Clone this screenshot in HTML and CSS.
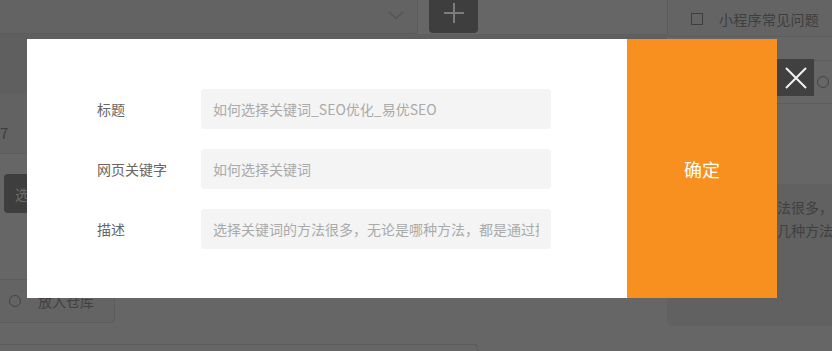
FILE: index.html
```html
<!DOCTYPE html>
<html lang="zh-CN">
<head>
  <meta charset="UTF-8">
  <meta name="viewport" content="width=device-width, initial-scale=1.0">
  <title>页面设置</title>
  <link rel="stylesheet" href="styles.css">
</head>
<body>

  <!-- page behind the mask -->
  <div class="page">
    <div class="main">
      <div class="toolbar">
        <div class="select">
          <svg class="chevron" width="16" height="9" viewBox="0 0 16 9"><path d="M1 1l7 6.5L15 1" fill="none" stroke="#555" stroke-width="1.6"/></svg>
        </div>
        <button class="add-btn">
          <svg width="22" height="22" viewBox="0 0 22 22"><path d="M11 1v20M1 11h20" stroke="#7c7c7c" stroke-width="2"/></svg>
        </button>
      </div>
      <div class="band"></div>
      <div class="row-num">7</div>
      <div class="row-pick"><button class="pick-btn">选择</button></div>
      <label class="store"><span class="radio"></span>放入仓库</label>
      <div class="box"></div>
    </div>

    <aside class="side">
      <div class="faq"><span class="check"></span>小程序常见问题</div>
      <div class="side-row"><span class="radio"></span></div>
      <div class="side-panel">
        <p>选择关键词的方法很多，无论是哪种方法，</p>
        <p>都是通过以下的几种方法来确定的</p>
      </div>
    </aside>
  </div>

  <!-- dialog -->
  <div class="mask">
    <div class="dialog">
      <form class="form">
        <div class="field">
          <label>标题</label>
          <input type="text" value="如何选择关键词_SEO优化_易优SEO">
        </div>
        <div class="field">
          <label>网页关键字</label>
          <input type="text" value="如何选择关键词">
        </div>
        <div class="field">
          <label>描述</label>
          <input type="text" value="选择关键词的方法很多，无论是哪种方法，都是通过搜索引擎来确定的">
        </div>
      </form>
      <button class="confirm">确定</button>
      <button class="close">
        <svg width="22" height="22" viewBox="0 0 22 22"><path d="M1 1l20 20M21 1L1 21" stroke="#f2f2f2" stroke-width="2"/></svg>
      </button>
    </div>
  </div>

</body>
</html>
```

FILE: styles.css
```css
* {
  box-sizing: border-box;
}

body {
  margin: 0;
  width: 832px;
  height: 351px;
  overflow: hidden;
  background-color: #666;
  font-family: "Noto Sans CJK SC", "Noto Sans", sans-serif;
  font-size: 14px;
  color: #404040;
}

p {
  margin: 0;
}

button {
  font-family: inherit;
  border: none;
  cursor: pointer;
}

/* page behind */
.page {
  display: flex;
  height: 351px;
}

.main {
  flex: none;
  width: 667px;
  display: flex;
  flex-direction: column;
}

.toolbar {
  display: flex;
  gap: 11px;
  height: 34px;
}

.select {
  position: relative;
  width: 418px;
  height: 34px;
  background-color: #636363;
  border-right: 1px solid #5c5c5c;
  border-bottom: 1px solid #5c5c5c;
  border-bottom-right-radius: 4px;
}

.chevron {
  position: absolute;
  right: 13px;
  top: 11px;
}

.add-btn {
  width: 49px;
  height: 40px;
  margin-top: -7px;
  background-color: #3e3e3e;
  border-radius: 0 0 4px 4px;
  display: flex;
  align-items: center;
  justify-content: center;
}

.band {
  flex: none;
  height: 59px;
  background-color: #5f5f5f;
}

.row-num {
  flex: none;
  height: 61px;
  padding-top: 30px;
  line-height: 20px;
  background-color: #626262;
  border-bottom: 1px solid #5c5c5c;
  color: #3f3f3f;
  font-size: 15px;
}

.row-pick {
  flex: none;
  height: 125px;
  padding: 20px 0 0 4px;
}

.pick-btn {
  height: 39px;
  padding: 0 11px;
  background-color: #3e3e3e;
  color: #6c6c6c;
  font-size: 14px;
  border-radius: 4px;
}

.store {
  flex: none;
  display: flex;
  align-items: center;
  gap: 17px;
  width: 115px;
  height: 44px;
  padding-left: 9px;
  white-space: nowrap;
  background-color: #646464;
  border: 1px solid #5c5c5c;
  border-left: none;
  border-radius: 0 0 4px 0;
  color: #404040;
  font-size: 14px;
}

.radio {
  width: 12px;
  height: 12px;
  border: 1px solid #444;
  border-radius: 50%;
  flex: none;
}

.box {
  flex: none;
  width: 478px;
  height: 20px;
  margin-top: 21px;
  border: 1px solid #5c5c5c;
  border-left: none;
  border-bottom: none;
  border-radius: 0 4px 0 0;
}

.side {
  flex: 1;
  min-width: 0;
  display: flex;
  flex-direction: column;
}

.faq {
  display: flex;
  align-items: center;
  height: 37px;
  padding: 1px 0 0 23px;
  background-color: #646464;
  border-left: 1px solid #5c5c5c;
  border-bottom: 1px solid #5c5c5c;
  border-bottom-left-radius: 4px;
  color: #3e3e3e;
  font-size: 14px;
  letter-spacing: 0.3px;
  white-space: nowrap;
}

.check {
  flex: none;
  width: 12px;
  height: 12px;
  margin-right: 16px;
  border: 1px solid #3d3d3d;
}

.side-row {
  display: flex;
  align-items: center;
  justify-content: flex-end;
  height: 44px;
  margin-top: 23px;
  padding-right: 3px;
  border-top: 1px solid #5c5c5c;
  border-bottom: 1px solid #5c5c5c;
}

.side-panel {
  height: 142px;
  margin-top: 80px;
  padding: 12px 0 0 12px;
  background-color: #616161;
  border-bottom-left-radius: 6px;
  white-space: nowrap;
  overflow: hidden;
  line-height: 23px;
  font-size: 14px;
  color: #404040;
}

/* dialog */
.mask {
  position: fixed;
  inset: 0;
  padding: 39px 0 0 27px;
}

.dialog {
  position: relative;
  display: flex;
  width: 750px;
  height: 259px;
}

.form {
  width: 600px;
  margin: 0;
  padding-top: 50px;
  background-color: #fff;
  display: flex;
  flex-direction: column;
  gap: 20px;
}

.field {
  display: flex;
  align-items: center;
}

.field label {
  width: 174px;
  padding-left: 70px;
  color: #666;
  font-size: 14px;
}

.field input {
  width: 350px;
  height: 40px;
  padding: 0 12px;
  border: none;
  border-radius: 4px;
  background-color: #f4f4f4;
  font-family: inherit;
  font-size: 14px;
  color: #aaa;
  outline: none;
}

.confirm {
  width: 150px;
  background-color: #f7901e;
  color: #fff;
  font-size: 18px;
  font-weight: normal;
}

.close {
  position: absolute;
  left: 750px;
  top: 20px;
  width: 37px;
  height: 37px;
  padding: 0;
  background-color: #404040;
  display: flex;
  align-items: center;
  justify-content: center;
}
```
